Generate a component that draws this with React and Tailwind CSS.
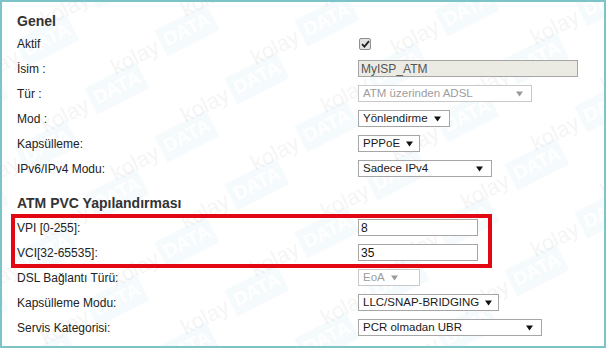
import React from "react";

const font = { fontFamily: '"Liberation Sans", Arial, sans-serif' };

const Arrow = ({ muted }) => (
  <svg width="7" height="6" viewBox="0 0 7 6" className="shrink-0">
    <path d="M0 0.5 L7 0.5 L3.5 5.5 Z" fill={muted ? "#9a9a9a" : "#111"} />
  </svg>
);

const Select = ({ value, width, muted = false, tight = false }) => (
  <div
    className={`h-[17px] flex items-center border bg-white pl-[4px] whitespace-nowrap ${
      tight ? "gap-[6px] pr-[6px]" : "justify-between pr-[8px]"
    } ${muted ? "border-[#c9c9c9] text-[#9d9d9d]" : "border-[#a6a6a6] text-[#1a1a1a]"}`}
    style={{ minWidth: width }}
  >
    <span className="text-[11.5px] leading-none">{value}</span>
    <Arrow muted={muted} />
  </div>
);

const TextBox = ({ value, width, readOnly = false }) => (
  <div
    className={`h-[17px] flex items-center border border-[#a6a6a6] px-[2px] text-[12px] leading-none whitespace-nowrap ${
      readOnly ? "bg-[#ebebe4] text-[#555]" : "bg-white text-[#111]"
    }`}
    style={{ width }}
  >
    {value}
  </div>
);

const Checkbox = () => (
  <div className="w-[12px] h-[12px] rounded-[2px] border border-[#8f8f8f] bg-[#e3e3e3] flex items-center justify-center">
    <svg width="9" height="8" viewBox="0 0 9 8">
      <path d="M1 4.2 L3.4 6.6 L8 1.2" stroke="#222" strokeWidth="1.8" fill="none" />
    </svg>
  </div>
);

const Row = ({ label, children }) => (
  <div className="h-[25px] flex items-center">
    <div className="w-[341px] text-[12px] text-[#222] whitespace-nowrap">{label}</div>
    <div>{children}</div>
  </div>
);

// faint "kolay DATA" tiles behind the form
const Watermark = () => {
  const marks = [];
  for (let r = -1; r < 7; r++) {
    for (let c = -1; c < 6; c++) {
      const x = c * 140 + r * -70 + 110;
      const y = r * 58 - c * 10 + 50;
      marks.push(
        <div
          key={`${r}-${c}`}
          aria-hidden="true"
          className="absolute flex items-center gap-[4px] -rotate-[27deg] origin-left"
          style={{ left: x, top: y }}
        >
          <span className="text-[22px] text-[#000] opacity-[0.035]">kolay</span>
          <span className="text-[19px] font-bold text-white bg-[#3d9ad6] opacity-[0.045] px-[4px]">DATA</span>
        </div>
      );
    }
  }
  return <div className="absolute inset-0 overflow-hidden pointer-events-none">{marks}</div>;
};

export default function App() {
  return (
    <div
      className="relative w-[606px] h-[348px] bg-white border-2 border-[#7cc4c8] overflow-hidden"
      style={font}
    >
      <Watermark />
      <div className="relative pl-[15px]">
        <h2 className="pt-[9px] h-[29px] text-[14px] leading-[20px] font-bold text-[#333]">Genel</h2>
        <Row label="Aktif">
          <div className="pl-[1px]"><Checkbox /></div>
        </Row>
        <Row label="İsim :">
          <TextBox value="MyISP_ATM" width={220} readOnly />
        </Row>
        <Row label="Tür :">
          <Select value="ATM üzerinden ADSL" width={174} muted />
        </Row>
        <Row label="Mod :">
          <Select value="Yönlendirme" width={92} tight />
        </Row>
        <Row label="Kapsülleme:">
          <Select value="PPPoE" width={62} tight />
        </Row>
        <Row label="IPv6/IPv4 Modu:">
          <Select value="Sadece IPv4" width={134} />
        </Row>
        <h2 className="pt-[12px] h-[34px] text-[14px] leading-[20px] font-bold text-[#333]">
          ATM PVC Yapılandırması
        </h2>
        <Row label="VPI [0-255]:">
          <TextBox value="8" width={120} />
        </Row>
        <Row label="VCI[32-65535]:">
          <TextBox value="35" width={120} />
        </Row>
        <Row label="DSL Bağlantı Türü:">
          <Select value="EoA" width={62} muted tight />
        </Row>
        <Row label="Kapsülleme Modu:">
          <Select value="LLC/SNAP-BRIDGING" width={135} tight />
        </Row>
        <Row label="Servis Kategorisi:">
          <Select value="PCR olmadan UBR" width={184} />
        </Row>
      </div>
      <div className="absolute left-[9px] top-[212px] w-[481px] h-[54px] border-4 border-[#e30613] pointer-events-none" />
    </div>
  );
}
